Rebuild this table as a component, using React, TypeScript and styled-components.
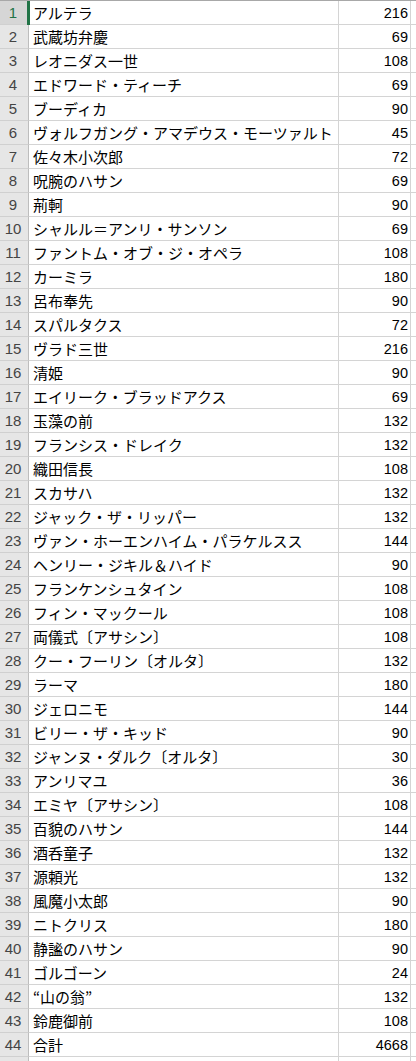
import React from "react";
import styled, { createGlobalStyle } from "styled-components";

const Global = createGlobalStyle`
  html, body { margin: 0; padding: 0; background: #ffffff; overflow: hidden; }
  body { font-family: "Noto Sans CJK JP", "Liberation Sans", sans-serif; }
`;

const rows: [string, number][] = [
  ["アルテラ", 216],
  ["武蔵坊弁慶", 69],
  ["レオニダス一世", 108],
  ["エドワード・ティーチ", 69],
  ["ブーディカ", 90],
  ["ヴォルフガング・アマデウス・モーツァルト", 45],
  ["佐々木小次郎", 72],
  ["呪腕のハサン", 69],
  ["荊軻", 90],
  ["シャルル＝アンリ・サンソン", 69],
  ["ファントム・オブ・ジ・オペラ", 108],
  ["カーミラ", 180],
  ["呂布奉先", 90],
  ["スパルタクス", 72],
  ["ヴラド三世", 216],
  ["清姫", 90],
  ["エイリーク・ブラッドアクス", 69],
  ["玉藻の前", 132],
  ["フランシス・ドレイク", 132],
  ["織田信長", 108],
  ["スカサハ", 132],
  ["ジャック・ザ・リッパー", 132],
  ["ヴァン・ホーエンハイム・パラケルスス", 144],
  ["ヘンリー・ジキル＆ハイド", 90],
  ["フランケンシュタイン", 108],
  ["フィン・マックール", 108],
  ["両儀式〔アサシン〕", 108],
  ["クー・フーリン〔オルタ〕", 132],
  ["ラーマ", 180],
  ["ジェロニモ", 144],
  ["ビリー・ザ・キッド", 90],
  ["ジャンヌ・ダルク〔オルタ〕", 30],
  ["アンリマユ", 36],
  ["エミヤ〔アサシン〕", 108],
  ["百貌のハサン", 144],
  ["酒呑童子", 132],
  ["源頼光", 132],
  ["風魔小太郎", 90],
  ["ニトクリス", 180],
  ["静謐のハサン", 90],
  ["ゴルゴーン", 24],
  ["“山の翁”", 132],
  ["鈴鹿御前", 108],
  ["合計", 4668],
];

const Sheet = styled.div`
  display: grid;
  grid-template-columns: 29px 310px 72px 5px;
  grid-auto-rows: 24px;
  border-top: 1px solid #a8a8a8;
  width: 416px;
  height: 1060px;
  overflow: hidden;
`;

const RowHead = styled.div<{ $active?: boolean }>`
  box-sizing: border-box;
  position: relative;
  display: flex;
  align-items: center;
  justify-content: center;
  padding-right: 2px;
  background: ${(p) => (p.$active ? "#d6d6d6" : "#e6e6e6")};
  border-right: 1px solid #bdbdbd;
  border-bottom: 1px solid #d0d0d0;
  color: ${(p) => (p.$active ? "#217346" : "#444444")};
  font-family: "Liberation Sans", Arial, sans-serif;
  font-size: 15px;
`;

const ActiveBar = styled.span`
  position: absolute;
  top: -1px;
  bottom: -1px;
  right: -2px;
  width: 3px;
  background: #217346;
`;

const NameCell = styled.div`
  box-sizing: border-box;
  display: flex;
  align-items: center;
  padding-left: 4px;
  border-right: 1px solid #d4d4d4;
  border-bottom: 1px solid #d4d4d4;
  font-family: "Noto Sans CJK JP", sans-serif;
  font-size: 15px;
  color: #000000;
  white-space: nowrap;
  overflow: hidden;
`;

const NumCell = styled.div`
  box-sizing: border-box;
  display: flex;
  align-items: center;
  justify-content: flex-end;
  padding-right: 2px;
  border-right: 1px solid #d4d4d4;
  border-bottom: 1px solid #d4d4d4;
  font-family: "Liberation Sans", Arial, sans-serif;
  font-size: 14.5px;
  color: #000000;
`;

const EmptyCell = styled.div`
  box-sizing: border-box;
  border-bottom: 1px solid #d4d4d4;
`;

export default function App() {
  const all: [string, number | null][] = [...rows, ["", null]];
  return (
    <>
      <Global />
      <Sheet>
        {all.map(([name, val], i) => (
          <React.Fragment key={i}>
            <RowHead $active={i === 0}>
              {i < rows.length ? i + 1 : ""}
              {i === 0 && <ActiveBar />}
            </RowHead>
            <NameCell>{name}</NameCell>
            <NumCell>{val ?? ""}</NumCell>
            <EmptyCell />
          </React.Fragment>
        ))}
      </Sheet>
    </>
  );
}
